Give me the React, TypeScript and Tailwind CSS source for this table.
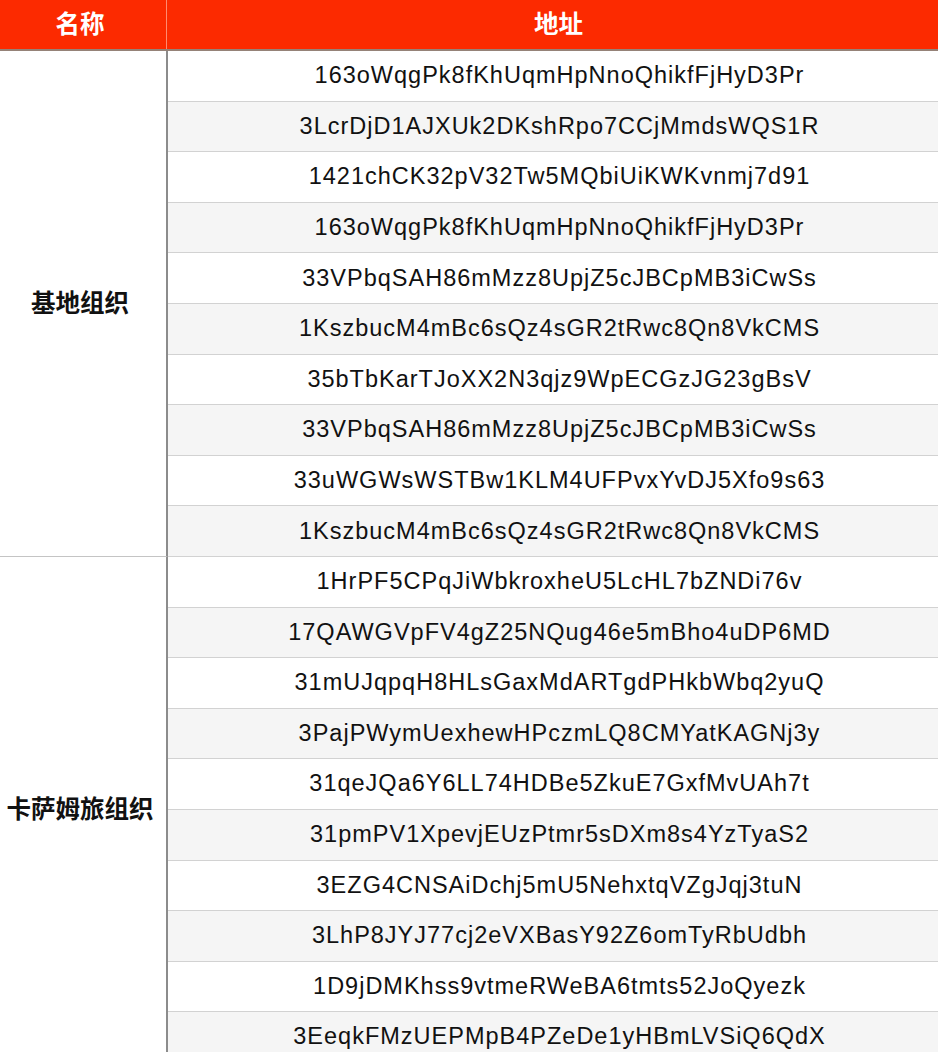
const groups = [
  {
    name: "基地组织",
    addresses: [
      "163oWqgPk8fKhUqmHpNnoQhikfFjHyD3Pr",
      "3LcrDjD1AJXUk2DKshRpo7CCjMmdsWQS1R",
      "1421chCK32pV32Tw5MQbiUiKWKvnmj7d91",
      "163oWqgPk8fKhUqmHpNnoQhikfFjHyD3Pr",
      "33VPbqSAH86mMzz8UpjZ5cJBCpMB3iCwSs",
      "1KszbucM4mBc6sQz4sGR2tRwc8Qn8VkCMS",
      "35bTbKarTJoXX2N3qjz9WpECGzJG23gBsV",
      "33VPbqSAH86mMzz8UpjZ5cJBCpMB3iCwSs",
      "33uWGWsWSTBw1KLM4UFPvxYvDJ5Xfo9s63",
      "1KszbucM4mBc6sQz4sGR2tRwc8Qn8VkCMS",
    ],
  },
  {
    name: "卡萨姆旅组织",
    addresses: [
      "1HrPF5CPqJiWbkroxheU5LcHL7bZNDi76v",
      "17QAWGVpFV4gZ25NQug46e5mBho4uDP6MD",
      "31mUJqpqH8HLsGaxMdARTgdPHkbWbq2yuQ",
      "3PajPWymUexhewHPczmLQ8CMYatKAGNj3y",
      "31qeJQa6Y6LL74HDBe5ZkuE7GxfMvUAh7t",
      "31pmPV1XpevjEUzPtmr5sDXm8s4YzTyaS2",
      "3EZG4CNSAiDchj5mU5NehxtqVZgJqj3tuN",
      "3LhP8JYJ77cj2eVXBasY92Z6omTyRbUdbh",
      "1D9jDMKhss9vtmeRWeBA6tmts52JoQyezk",
      "3EeqkFMzUEPMpB4PZeDe1yHBmLVSiQ6QdX",
    ],
  },
];

const font = { fontFamily: '"Liberation Sans", Arial, "Noto Sans CJK SC", sans-serif' };

export default function App() {
  return (
    <div className="w-[938px] h-[1052px] overflow-hidden bg-white" style={font}>
      <div className="flex h-[51px] bg-[#fc2a00] border-b-2 border-[#958278] text-white font-bold text-[24.5px]">
        <div className="w-[167px] flex items-center justify-center border-r border-[#ff8a70] pt-px pr-[6px]">名称</div>
        <div className="flex-1 flex items-center justify-center pt-px pl-[12px]">地址</div>
      </div>
      {groups.map((g, gi) => (
        <div key={gi} className="flex">
          <div className="w-[168px] shrink-0 flex items-center justify-center border-r-2 border-[#8c8c8c] border-b border-b-[#c4c4c4] font-bold text-[24.5px] text-[#111] pt-0.5 pr-[6px]">
            {g.name}
          </div>
          <div className="flex-1 flex flex-col">
            {g.addresses.map((a, i) => (
              <div
                key={i}
                className={
                  "h-[50.6px] flex items-center justify-center border-b border-[#d2d2d2] pl-[13px] text-[23.5px] tracking-[1px] text-[#111] " +
                  (i % 2 === 0 ? "bg-white" : "bg-[#f5f5f5]")
                }
              >
                {a}
              </div>
            ))}
          </div>
        </div>
      ))}
    </div>
  );
}
